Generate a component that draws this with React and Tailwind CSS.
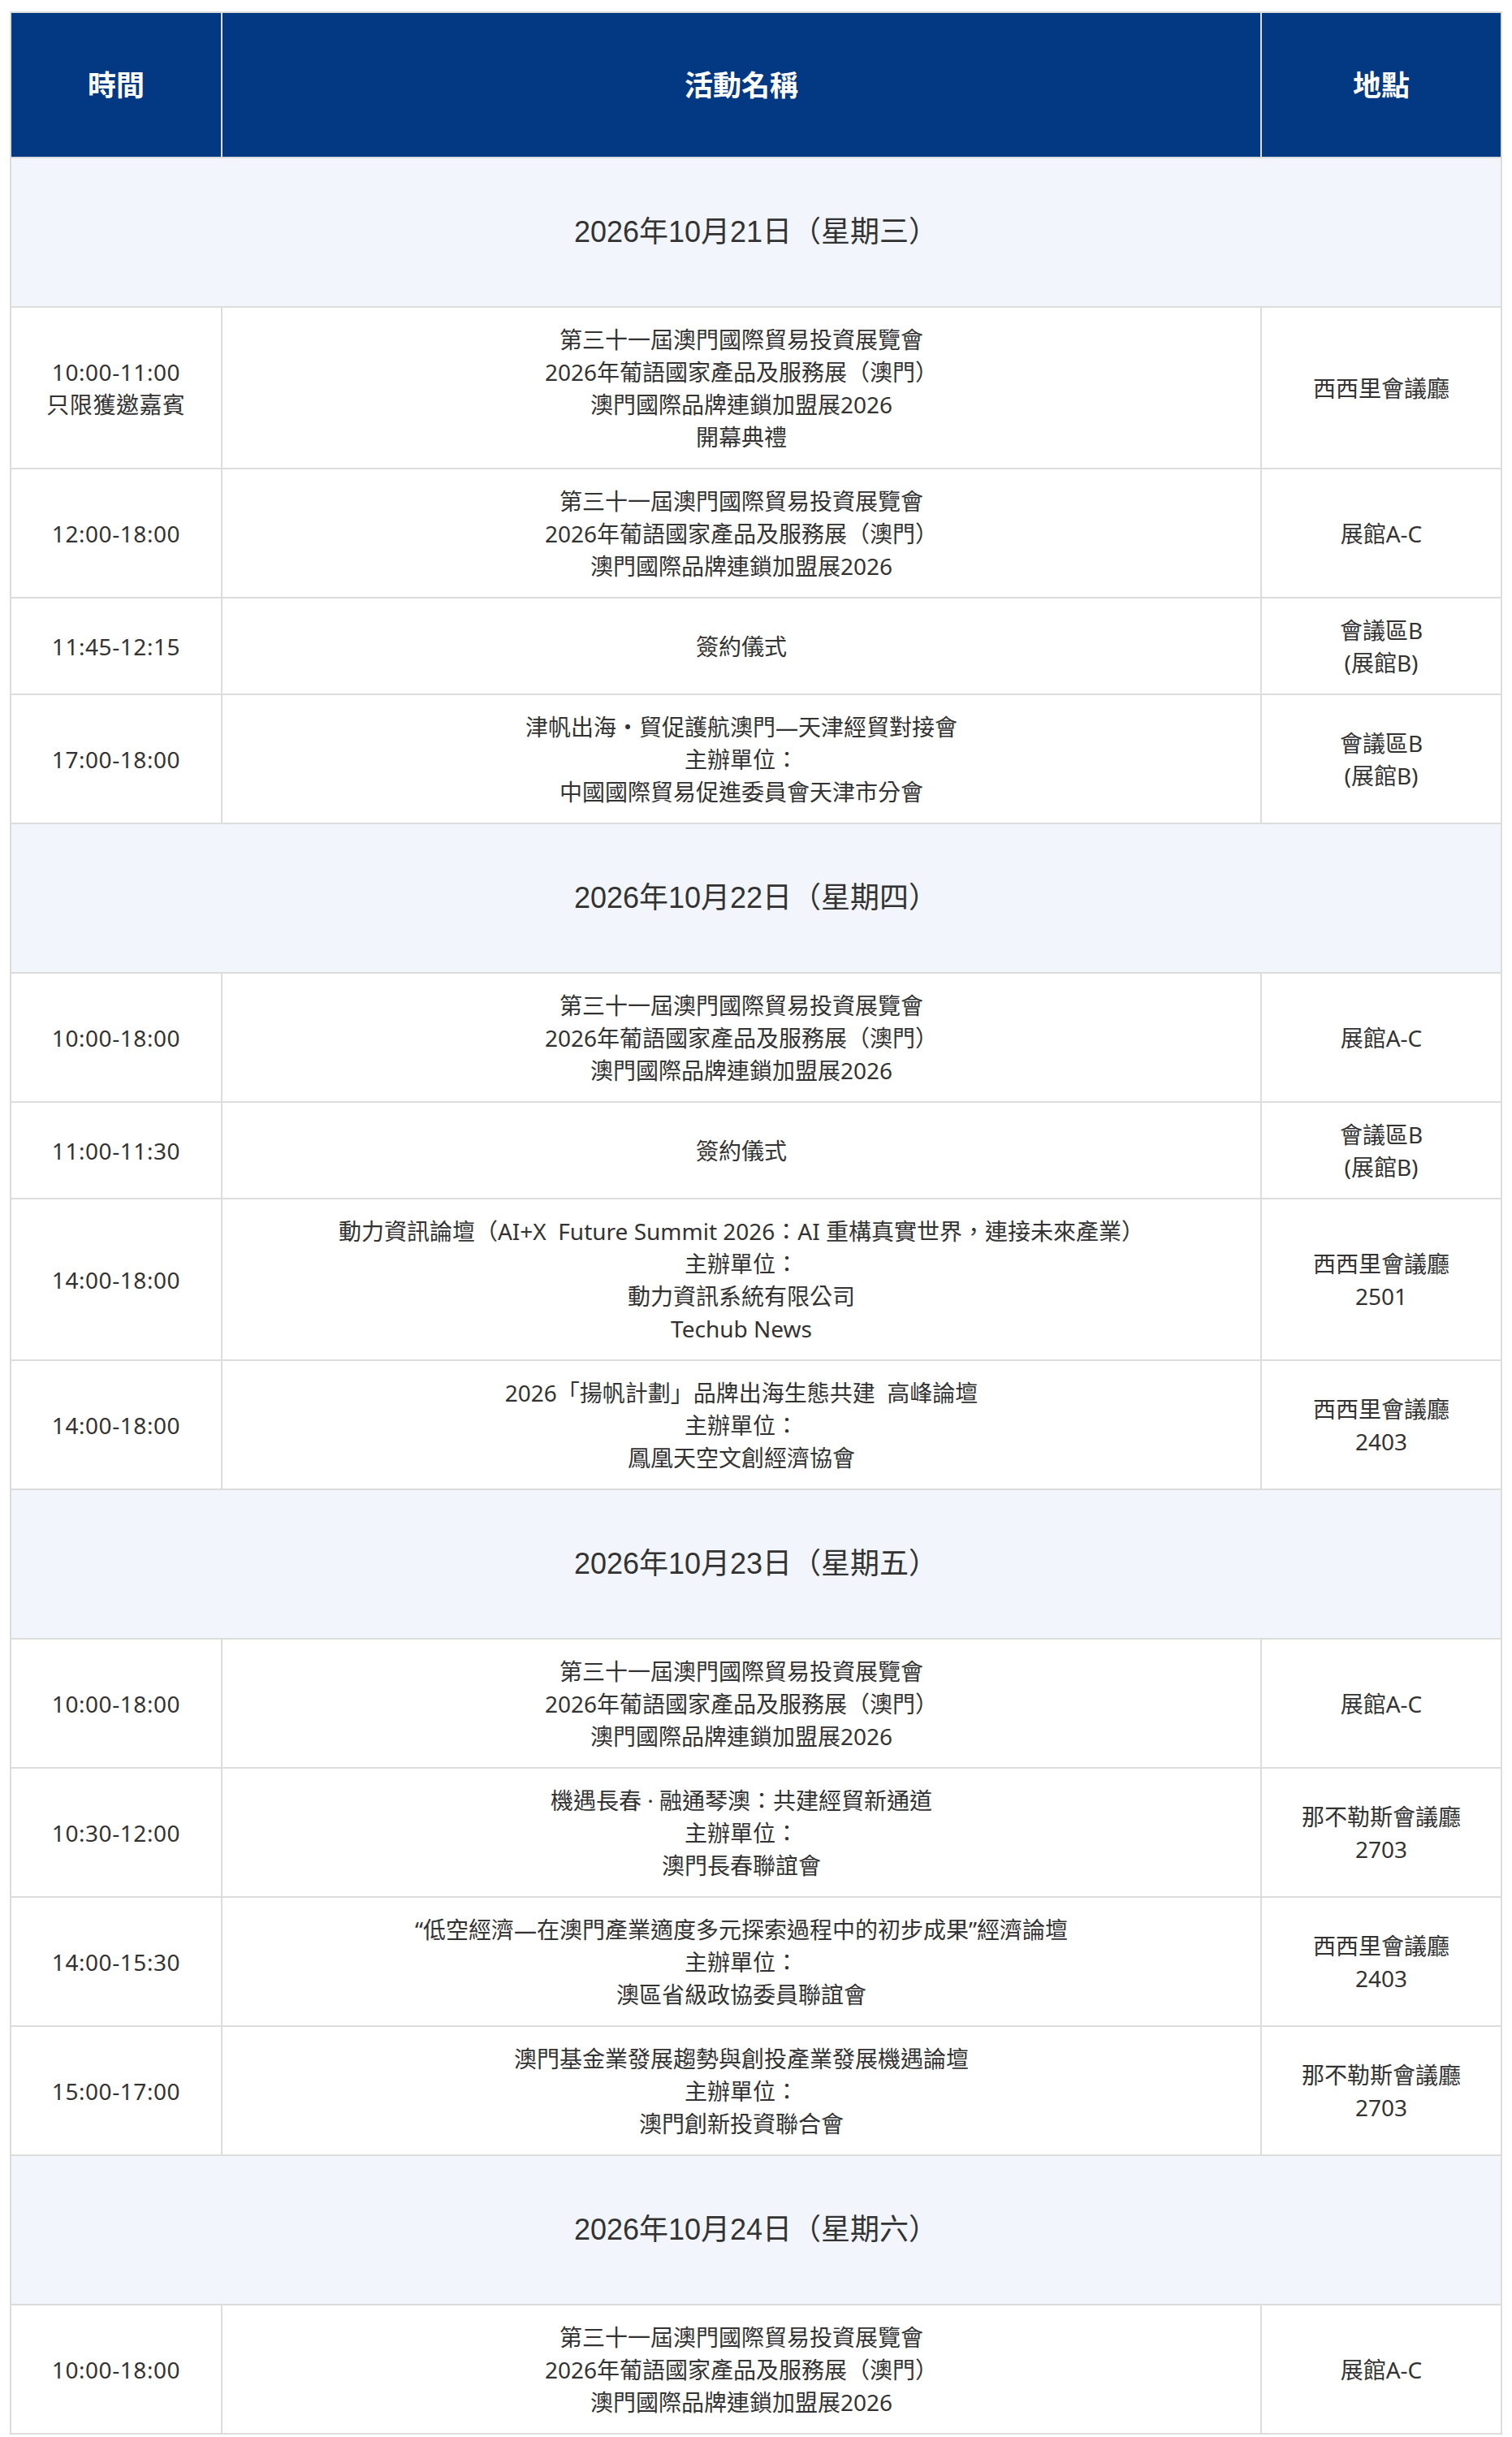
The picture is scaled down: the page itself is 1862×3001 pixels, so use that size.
import React from "react";

const EXPO = [
  "第三十一屆澳門國際貿易投資展覽會",
  "2026年葡語國家產品及服務展（澳門）",
  "澳門國際品牌連鎖加盟展2026",
];

const days = [
  {
    date: "2026年10月21日（星期三）",
    rows: [
      { time: ["10:00-11:00", "只限獲邀嘉賓"], name: [...EXPO, "開幕典禮"], place: ["西西里會議廳"] },
      { time: ["12:00-18:00"], name: EXPO, place: ["展館A-C"] },
      { time: ["11:45-12:15"], name: ["簽約儀式"], place: ["會議區B", "(展館B)"] },
      {
        time: ["17:00-18:00"],
        name: ["津帆出海・貿促護航澳門—天津經貿對接會", "主辦單位：", "中國國際貿易促進委員會天津市分會"],
        place: ["會議區B", "(展館B)"],
      },
    ],
  },
  {
    date: "2026年10月22日（星期四）",
    rows: [
      { time: ["10:00-18:00"], name: EXPO, place: ["展館A-C"] },
      { time: ["11:00-11:30"], name: ["簽約儀式"], place: ["會議區B", "(展館B)"] },
      {
        time: ["14:00-18:00"],
        name: [
          "動力資訊論壇（AI+X\u00a0 Future Summit 2026：AI 重構真實世界，連接未來產業）",
          "主辦單位：",
          "動力資訊系統有限公司",
          "Techub News",
        ],
        place: ["西西里會議廳", "2501"],
      },
      {
        time: ["14:00-18:00"],
        name: ["2026「揚帆計劃」品牌出海生態共建\u00a0 高峰論壇", "主辦單位：", "鳳凰天空文創經濟協會"],
        place: ["西西里會議廳", "2403"],
      },
    ],
  },
  {
    date: "2026年10月23日（星期五）",
    rows: [
      { time: ["10:00-18:00"], name: EXPO, place: ["展館A-C"] },
      {
        time: ["10:30-12:00"],
        name: ["機遇長春 · 融通琴澳：共建經貿新通道", "主辦單位：", "澳門長春聯誼會"],
        place: ["那不勒斯會議廳", "2703"],
      },
      {
        time: ["14:00-15:30"],
        name: ["“低空經濟—在澳門產業適度多元探索過程中的初步成果”經濟論壇", "主辦單位：", "澳區省級政協委員聯誼會"],
        place: ["西西里會議廳", "2403"],
      },
      {
        time: ["15:00-17:00"],
        name: ["澳門基金業發展趨勢與創投產業發展機遇論壇", "主辦單位：", "澳門創新投資聯合會"],
        place: ["那不勒斯會議廳", "2703"],
      },
    ],
  },
  {
    date: "2026年10月24日（星期六）",
    rows: [{ time: ["10:00-18:00"], name: EXPO, place: ["展館A-C"] }],
  },
];

function Lines({ items }) {
  return items.map((t, i) => <div key={i}>{t}</div>);
}

export default function App() {
  return (
    <div className="bg-white px-[12px] pt-[14px] pb-[6px]">
      <table className="w-full table-fixed border-collapse border-2 border-[#dcdcdc] font-['Noto_Sans','Noto_Sans_CJK_TC',sans-serif] text-[28px] leading-[40px] text-[#333]">
        <colgroup>
          <col className="w-[260px]" />
          <col />
          <col className="w-[296px]" />
        </colgroup>
        <thead>
          <tr className="h-[179px] bg-[#033883] text-[35px] font-bold text-white">
            <th className="border-2 border-[#dcdcdc]">時間</th>
            <th className="border-2 border-[#dcdcdc]">活動名稱</th>
            <th className="border-2 border-[#dcdcdc]">地點</th>
          </tr>
        </thead>
        <tbody>
          {days.map((d) => (
            <React.Fragment key={d.date}>
              <tr className="h-[184px] bg-[#f2f6fc]">
                <td
                  colSpan={3}
                  className="border-2 border-[#dcdcdc] text-center font-['Liberation_Sans','Noto_Sans_CJK_TC',sans-serif] text-[36px]"
                >
                  {d.date}
                </td>
              </tr>
              {d.rows.map((r, i) => (
                <tr key={i}>
                  <td className="border-2 border-[#dcdcdc] px-3 py-[18.5px] text-center align-middle tracking-[0.02em]">
                    <Lines items={r.time} />
                  </td>
                  <td className="border-2 border-[#dcdcdc] px-3 py-[18.5px] text-center align-middle">
                    <Lines items={r.name} />
                  </td>
                  <td className="border-2 border-[#dcdcdc] px-3 py-[18.5px] text-center align-middle">
                    <Lines items={r.place} />
                  </td>
                </tr>
              ))}
            </React.Fragment>
          ))}
        </tbody>
      </table>
    </div>
  );
}
